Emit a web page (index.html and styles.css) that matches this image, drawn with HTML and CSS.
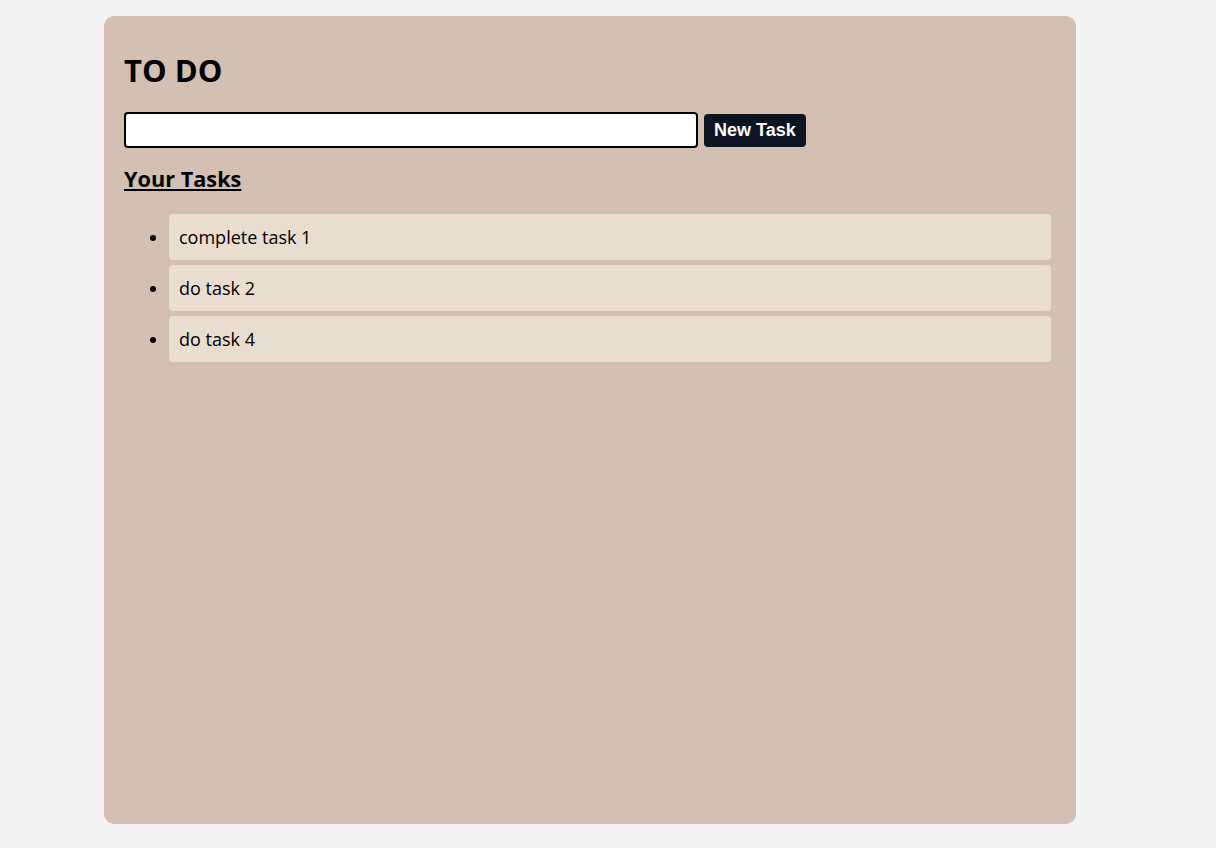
FILE: index.html
```html
<!DOCTYPE html>
<html>
<head>
<meta charset="utf-8">
<title>TO DO</title>
<link rel="stylesheet" href="styles.css">
</head>
<body>
<main class="card">
  <h1 class="title">TO DO</h1>
  <form class="new-task" onsubmit="return false">
    <input class="task-input" type="text">
    <button class="task-btn" type="submit">New Task</button>
  </form>
  <h2 class="subtitle">Your Tasks</h2>
  <ul class="tasks">
    <li class="task">complete task 1</li>
    <li class="task">do task 2</li>
    <li class="task">do task 4</li>
  </ul>
</main>
</body>
</html>
```
FILE: styles.css
```css
html, body {
  margin: 0;
  padding: 0;
  background: #f4f4f4;
}
body {
  padding: 16px 0 0 104px;
  font-family: "Open Sans", "Noto Sans", sans-serif;
  color: #000;
}
.card {
  box-sizing: border-box;
  width: 972px;
  height: 808px;
  background: #d3c0b2;
  border-radius: 10px;
  padding: 34px 20px 20px 20px;
}
.title {
  margin: 0;
  font-size: 31px;
  line-height: 40px;
  font-weight: 700;
}
.new-task {
  display: flex;
  align-items: center;
  gap: 6px;
  margin-top: 22px;
}
.task-input {
  box-sizing: border-box;
  width: 574px;
  height: 36px;
  border: 2px solid #000;
  border-radius: 4px;
  background: #fff;
  margin: 0;
  padding: 0 6px;
}
.task-btn {
  box-sizing: border-box;
  height: 33px;
  padding: 0 10px;
  background: #0d1422;
  color: #fff;
  border: none;
  border-radius: 4px;
  font-family: "Liberation Sans", Arial, sans-serif;
  font-weight: 700;
  font-size: 18px;
}
.subtitle {
  margin: 16px 0 0 0;
  font-size: 21.7px;
  line-height: 30px;
  font-weight: 700;
  text-decoration: underline;
}
.tasks {
  margin: 20px 0 0 0;
  padding: 0 0 0 40px;
}
.task {
  margin: 5px;
  padding: 10px;
  line-height: 26px;
  font-size: 18px;
  background: #e9ddd0;
  border-radius: 4px;
}
```
